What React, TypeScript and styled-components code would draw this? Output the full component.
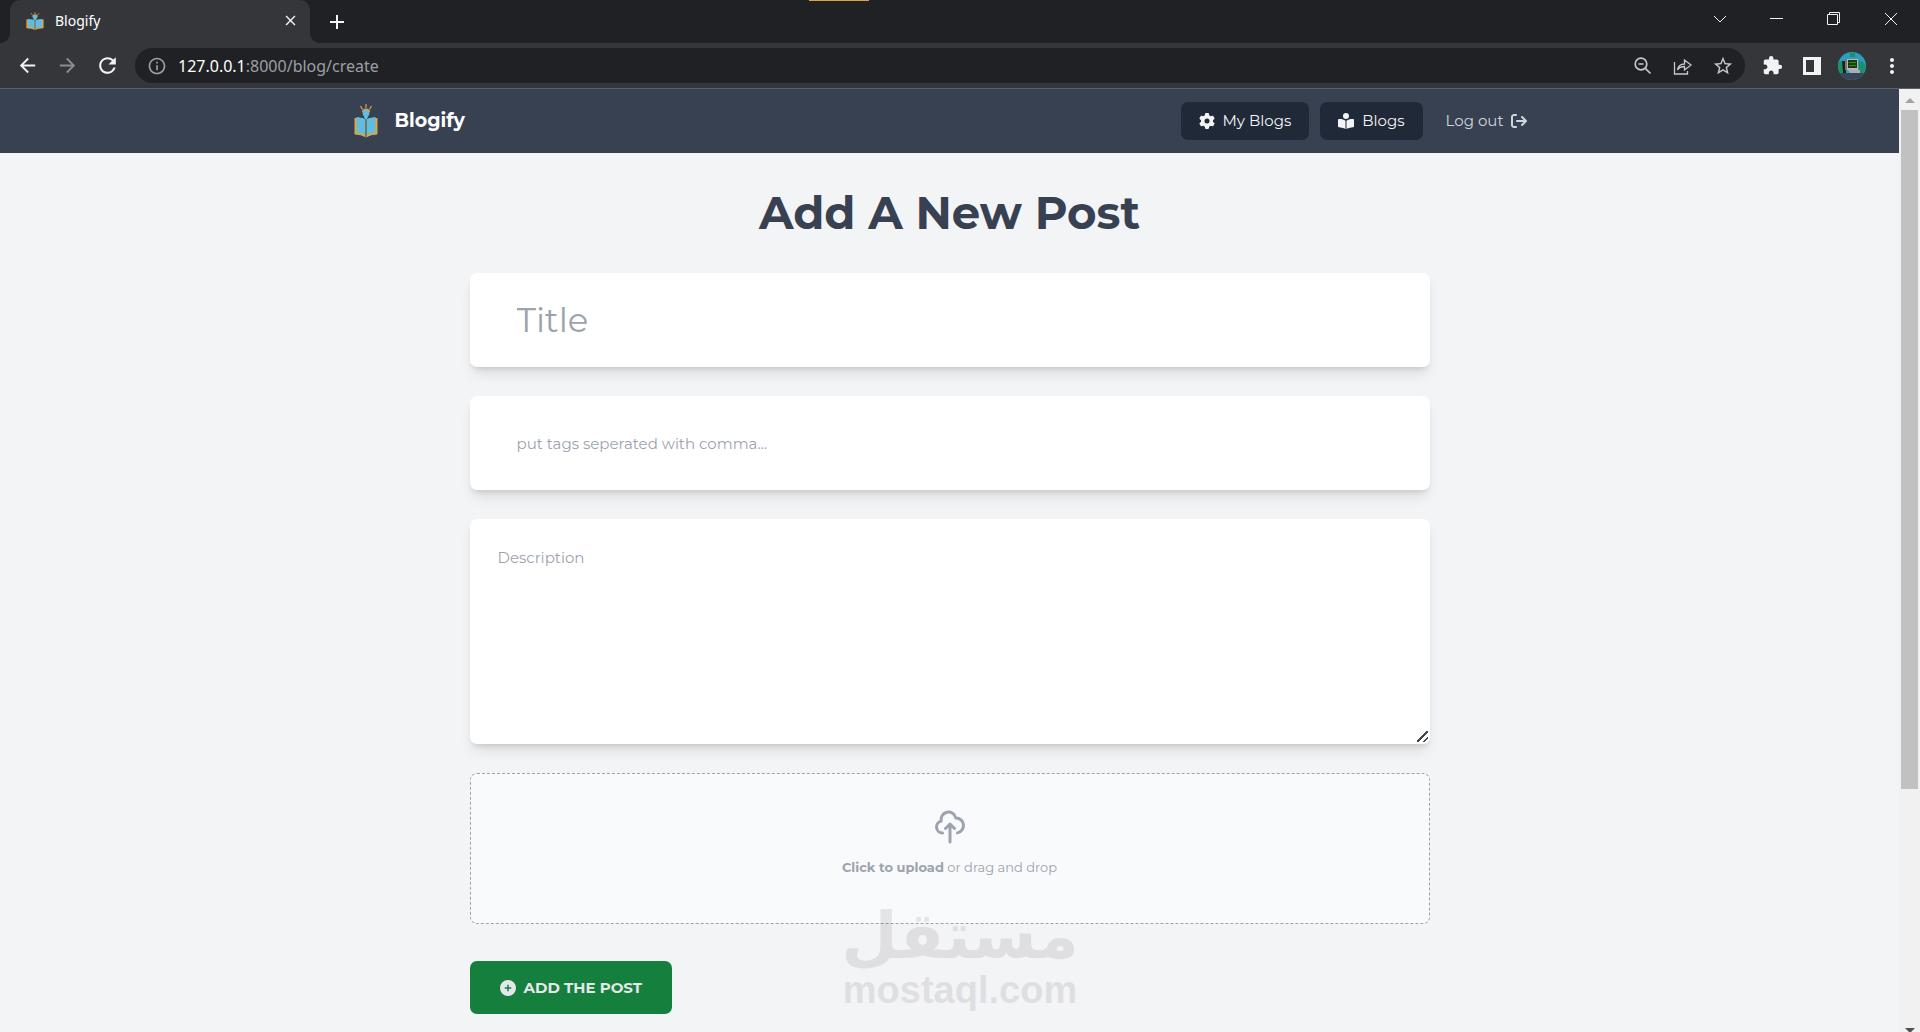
import React from "react";
import styled, { createGlobalStyle, css } from "styled-components";
import { FaGear, FaBookOpenReader, FaArrowRightFromBracket, FaCirclePlus } from "react-icons/fa6";
import {
  MdArrowBack,
  MdArrowForward,
  MdRefresh,
  MdInfoOutline,
  MdStarOutline,
  MdExtension,
  MdMoreVert,
  MdClose,
  MdAdd,
} from "react-icons/md";

const GlobalStyle = createGlobalStyle`
  *, *::before, *::after { box-sizing: border-box; }
  body {
    margin: 0;
    background: #f3f4f6;
    font-family: Montserrat, Inter, sans-serif;
    font-size: 15px;
  }
  button, input, textarea { font: inherit; }
  button { border: 0; cursor: pointer; }
  svg { display: block; flex: none; }
`;

const Window = styled.div`
  display: flex;
  flex-direction: column;
  height: 100vh;
  overflow: hidden;
`;

/* Browser chrome */

const TabStrip = styled.header`
  display: flex;
  align-items: stretch;
  height: 43px;
  padding-left: 10px;
  flex: none;
  position: relative;
  background: #202124;
  color: #fff;
  font-family: "Segoe UI", "Noto Sans", sans-serif;
`;

const TopMark = styled.span`
  position: absolute;
  top: 0;
  left: calc(50% - 151px);
  width: 60px;
  height: 1px;
  background: #d9a441;
`;

const Tab = styled.div`
  display: flex;
  align-items: center;
  gap: 11px;
  width: 300px;
  padding: 0 10px 2px 16px;
  border-radius: 10px 10px 0 0;
  background: #35363a;
  font-size: 14px;
  position: relative;
  &::before, &::after {
    content: "";
    position: absolute;
    bottom: 0;
    width: 10px;
    height: 10px;
  }
  &::before {
    right: 100%;
    background: radial-gradient(circle at 0 0, transparent 10px, #35363a 10px);
  }
  &::after {
    left: 100%;
    background: radial-gradient(circle at 100% 0, transparent 10px, #35363a 10px);
  }
`;

const TabTitle = styled.span`
  flex: 1;
`;

const ChromeButton = styled.button<{ $w?: number; $dim?: boolean; $soft?: boolean }>`
  display: flex;
  align-items: center;
  justify-content: center;
  width: ${(p) => p.$w ?? 40}px;
  padding: 0;
  background: transparent;
  color: ${(p) => (p.$dim ? "#8b8c90" : p.$soft ? "#c4c7cc" : "#f1f3f4")};
`;

const WindowControls = styled.div`
  display: flex;
  margin-left: auto;
  padding: 0 1px 6px 0;
`;

const Toolbar = styled.div`
  display: flex;
  align-items: center;
  height: 46px;
  flex: none;
  padding: 0 8px 0 7px;
  background: #35363a;
  border-bottom: 1px solid #5f6063;
`;

const AddressBar = styled.div`
  display: flex;
  align-items: center;
  flex: 1;
  height: 35px;
  margin: 0 7px 0 8px;
  padding: 0 2px 0 12px;
  border-radius: 18px;
  background: #202124;
  color: #9aa0a6;
`;

const Address = styled.div`
  flex: 1;
  padding-left: 11px;
  outline: 0;
  color: #9aa0a6;
  font-family: "Segoe UI", "Noto Sans", sans-serif;
  font-size: 16px;
  line-height: 24px;
`;

const Host = styled.span`
  color: #fff;
`;

/* Page */

const Viewport = styled.div`
  display: flex;
  flex: 1;
  min-height: 0;
`;

const Page = styled.div`
  flex: 1;
  min-width: 0;
  overflow: hidden;
`;

const Nav = styled.nav`
  background: #374151;
`;

const NavInner = styled.div`
  display: flex;
  align-items: center;
  justify-content: space-between;
  max-width: 1200px;
  height: 64px;
  margin: 0 auto;
  padding: 0 11px 0 4px;
`;

const Brand = styled.a`
  display: flex;
  align-items: center;
  gap: 17px;
  color: #fff;
  font-size: 19px;
  line-height: 24px;
  font-weight: 700;
  text-decoration: none;
`;

const NavLinks = styled.div`
  display: flex;
  gap: 11px;
`;

const NavLink = styled.a<{ $filled?: boolean }>`
  display: flex;
  align-items: center;
  gap: 7px;
  height: 38px;
  padding: 0 12px 1px;
  border-radius: 7px;
  color: #d1d5db;
  font-size: 15px;
  text-decoration: none;
  ${(p) =>
    p.$filled &&
    css`
      gap: 8px;
      padding: 0 18px 1px;
      background: #1f2937;
      color: #f3f4f6;
    `}
`;

const Main = styled.main`
  max-width: 1000px;
  margin: 0 auto;
  padding: 32px 20px;
`;

const Heading = styled.h1`
  margin: 0 0 32px;
  color: #374151;
  font-size: 45px;
  font-weight: 700;
  line-height: 56px;
  text-align: center;
`;

const Form = styled.form`
  display: flex;
  flex-direction: column;
  align-items: flex-start;
  gap: 29px;
`;

const field = css`
  display: block;
  width: 100%;
  border: 0;
  border-radius: 7px;
  outline: 0;
  background: #fff;
  color: #374151;
  box-shadow: 0 9px 14px -3px rgba(0, 0, 0, 0.1), 0 4px 5px -2px rgba(0, 0, 0, 0.1);
  &::placeholder { color: #9ca3af; opacity: 1; }
`;

const TextField = styled.input<{ $large?: boolean }>`
  ${field}
  height: 94px;
  padding: 0 47px;
  font-size: ${(p) => (p.$large ? 34 : 15)}px;
`;

const TextArea = styled.textarea`
  ${field}
  height: 225px;
  padding: 27px 28px;
  line-height: 24px;
  resize: vertical;
  &::-webkit-resizer {
    background: linear-gradient(135deg, transparent 45%, #444 45% 55%, transparent 55% 73%, #444 73% 83%, transparent 83%)
      2px 2px / 11px 11px no-repeat;
  }
`;

const DropZone = styled.label`
  display: flex;
  flex-direction: column;
  align-items: center;
  justify-content: center;
  gap: 12px;
  width: 100%;
  height: 151px;
  padding-bottom: 11px;
  border: 1px dashed #9ca3af;
  border-radius: 7px;
  background: #f9fafb;
  color: #9ca3af;
  font-size: 13px;
  line-height: 20px;
  cursor: pointer;
  b { font-weight: 700; }
`;

const Submit = styled.button`
  display: flex;
  align-items: center;
  gap: 8px;
  height: 53px;
  margin-top: 8px;
  padding: 0 30px;
  border-radius: 7px;
  background: #15803d;
  color: #e5e7eb;
  font-weight: 700;
  text-transform: uppercase;
`;

const ScrollBar = styled.div`
  display: flex;
  flex-direction: column;
  align-items: center;
  flex: none;
  width: 21px;
  background: #f1f1f1;
`;

const ScrollArrow = styled.span<{ $down?: boolean }>`
  flex: none;
  margin: ${(p) => (p.$down ? "auto 0 -1px" : "9px 0 7px")};
  border: 5px solid transparent;
  ${(p) => (p.$down ? "border-top-color: #505050; border-bottom-width: 0;" : "border-bottom-color: #a3a3a3; border-top-width: 0;")}
`;

const Thumb = styled.span`
  width: 17px;
  height: 72%;
  background: #c1c1c1;
`;

const Watermark = styled.div`
  position: absolute;
  left: 50%;
  bottom: 20px;
  transform: translateX(-50%);
  display: flex;
  flex-direction: column;
  align-items: center;
  color: #000;
  opacity: 0.08;
  font-weight: 700;
  white-space: nowrap;
  pointer-events: none;
`;

const WatermarkName = styled.span`
  font-family: "DejaVu Sans", sans-serif;
  font-size: 65px;
  line-height: 64px;
`;

const WatermarkSite = styled.span`
  font-family: "Liberation Sans", sans-serif;
  font-size: 38px;
  line-height: 44px;
`;

const BookLogo = ({ width, height }: { width: number; height: number }) => (
  <svg width={width} height={height} viewBox="0 0 24 34" preserveAspectRatio="none" aria-hidden="true">
    <path d="M1 14v16q6 0 11 3q5-3 11-3V14" fill="#dba54b" stroke="#dba54b" strokeWidth="1" />
    <path d="M2.500 13q6 0 9 2.500V31q-4-2.500-9-2.500zM21.500 13q-6 0-9 2.500V31q4-2.500 9-2.500z" fill="#63bcdc" />
    <path d="M12 15V33M4 12.500q5 0 8 3q3-3 8-3" stroke="#374151" fill="none" />
    <path d="M8.500 8.500a3.500 3.500 0 0 1 7 0q0 2-1.500 4l-1 3h-2l-1-3q-1.500-2-1.500-4z" fill="#63bcdc" />
    <path d="M8.500 8q.5-3 3.500-3t3.500 3M12 4V0M8.500 5.500L6.500 2M15.500 5.500l2-3.500" fill="none" stroke="#dba54b" strokeWidth="1.200" />
  </svg>
);

const line = { fill: "none", stroke: "currentColor" } as const;

export default function App() {
  return (
    <>
      <GlobalStyle />
      <Window>
        <TabStrip>
          <TopMark />
          <Tab>
            <BookLogo width={18} height={18} />
            <TabTitle>Blogify</TabTitle>
            <ChromeButton $w={20} aria-label="Close tab"><MdClose size={17} /></ChromeButton>
          </Tab>
          <ChromeButton $w={54} aria-label="New tab"><MdAdd size={24} /></ChromeButton>
          <WindowControls>
            <ChromeButton $w={57} aria-label="Search tabs">
              <svg width="14" height="8" {...line}><path d="M1 1l6 6 6-6" /></svg>
            </ChromeButton>
            <ChromeButton $w={57} aria-label="Minimize">
              <svg width="13" height="1"><path d="M0 .5h13" stroke="currentColor" /></svg>
            </ChromeButton>
            <ChromeButton $w={57} aria-label="Restore">
              <svg width="13" height="13" {...line}><path d="M.5 2.500h10v10H.5zM2.500 2.500v-2h10v10h-2" /></svg>
            </ChromeButton>
            <ChromeButton $w={57} aria-label="Close window">
              <svg width="14" height="14" {...line}><path d="M1 1l12 12M13 1L1 13" /></svg>
            </ChromeButton>
          </WindowControls>
        </TabStrip>

        <Toolbar>
          <ChromeButton aria-label="Back"><MdArrowBack size={23} /></ChromeButton>
          <ChromeButton aria-label="Forward" $dim><MdArrowForward size={23} /></ChromeButton>
          <ChromeButton aria-label="Reload"><MdRefresh size={25} /></ChromeButton>
          <AddressBar>
            <MdInfoOutline size={20} />
            <Address role="textbox" aria-label="Address" contentEditable suppressContentEditableWarning spellCheck={false}>
              <Host>127.0.0.1</Host>:8000/blog/create
            </Address>
            <ChromeButton aria-label="Zoom" $soft>
              <svg width="18" height="18" strokeWidth="1.700" {...line}>
                <circle cx="7" cy="7" r="5.800" />
                <path d="M4.500 7h5M11.300 11.300l5.200 5.200" />
              </svg>
            </ChromeButton>
            <ChromeButton aria-label="Share" $soft>
              <svg width="20" height="18" strokeWidth="1.300" {...line}>
                <path d="M1.500 5v12h13v-3M4.500 13q1-6 7-6V3l6.500 5-6.500 5V9.500q-5 0-7 3.500z" />
              </svg>
            </ChromeButton>
            <ChromeButton aria-label="Bookmark" $soft><MdStarOutline size={22} /></ChromeButton>
          </AddressBar>
          <ChromeButton aria-label="Extensions"><MdExtension size={21} /></ChromeButton>
          <ChromeButton aria-label="Side panel">
            <svg width="18" height="18"><path d="M0 0h18v18H0zM3 3v12h8V3z" fill="currentColor" fillRule="evenodd" /></svg>
          </ChromeButton>
          <ChromeButton aria-label="Profile">
            <svg width="28" height="28" viewBox="0 0 28 28">
              <circle cx="14" cy="14" r="14" fill="#2d9cbd" />
              <path d="M1 10q4-3 6 2v9H2q-3-5-1-11zM21 9q4 0 6 4 1 5-2 8h-4zM12 1h5v4h-5z" fill="#1f8f6a" />
              <path d="M2 21h24q-4 7-12 7T2 21z" fill="#3a4658" />
              <path d="M4 9h4v12H5z" fill="#15251c" />
              <path d="M7 7h13v11H7z" fill="#77727c" />
              <path d="M9 7h11v11H9z" fill="#b9b4bd" />
              <path d="M10 8h9v8h-9z" fill="#173d0c" />
              <path d="M11 10.500h7M11 13.500h7" stroke="#3f8a18" />
              <path d="M10 18h12v3H12z" fill="#a9adb8" />
            </svg>
          </ChromeButton>
          <ChromeButton aria-label="Menu"><MdMoreVert size={24} /></ChromeButton>
        </Toolbar>

        <Viewport>
          <Page>
            <Nav>
              <NavInner>
                <Brand href="#">
                  <BookLogo width={24} height={34} />
                  Blogify
                </Brand>
                <NavLinks>
                  <NavLink href="#" $filled><FaGear size={16} />My Blogs</NavLink>
                  <NavLink href="#" $filled><FaBookOpenReader size={16} />Blogs</NavLink>
                  <NavLink href="#">Log out<FaArrowRightFromBracket size={16} /></NavLink>
                </NavLinks>
              </NavInner>
            </Nav>
            <Main>
              <Heading>Add A New Post</Heading>
              <Form onSubmit={(e) => e.preventDefault()}>
                <TextField $large aria-label="Title" placeholder="Title" />
                <TextField aria-label="Tags" placeholder="put tags seperated with comma..." />
                <TextArea aria-label="Description" placeholder="Description" />
                <DropZone htmlFor="image">
                  <svg width="36" height="36" viewBox="0 0 24 24" strokeWidth="2" strokeLinecap="round" strokeLinejoin="round" {...line}>
                    <path d="M7 16a4 4 0 01-.88-7.903A5 5 0 1115.900 6L16 6a5 5 0 011 9.900M15 13l-3-3m0 0l-3 3m3-3v12" />
                  </svg>
                  <span><b>Click to upload</b> or drag and drop</span>
                  <input id="image" type="file" hidden />
                </DropZone>
                <Submit type="submit"><FaCirclePlus size={16} />Add the post</Submit>
              </Form>
            </Main>
          </Page>
          <ScrollBar aria-hidden="true">
            <ScrollArrow />
            <Thumb />
            <ScrollArrow $down />
          </ScrollBar>
        </Viewport>
        <Watermark aria-hidden="true">
          <WatermarkName lang="ar" dir="rtl">مستقل</WatermarkName>
          <WatermarkSite>mostaql.com</WatermarkSite>
        </Watermark>
      </Window>
    </>
  );
}
